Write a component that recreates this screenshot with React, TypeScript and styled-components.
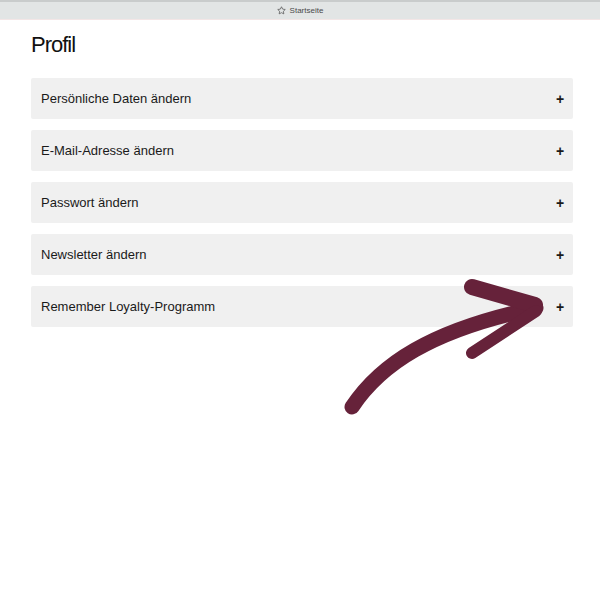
import React from 'react'
import styled, { createGlobalStyle } from 'styled-components'

const GlobalStyle = createGlobalStyle`
  html, body {
    margin: 0;
    padding: 0;
    background: #ffffff;
    font-family: "Liberation Sans", Arial, sans-serif;
  }
`

const Screen = styled.div`
  position: relative;
  width: 600px;
  height: 600px;
  overflow: hidden;
  background: #ffffff;
`

const TabBar = styled.div`
  height: 17px;
  border-top: 2px solid #c9cccc;
  border-bottom: 1px solid #f3e6e6;
  background: #e2e5e5;
  display: flex;
  align-items: center;
  justify-content: center;
  gap: 4px;
  font-size: 8px;
  color: #4a4a4a;
`

const Page = styled.div`
  padding: 12px 27px 0 31px;
`

const Title = styled.h1`
  margin: 0 0 20px 0;
  font-size: 22px;
  font-weight: 400;
  letter-spacing: -1px;
  line-height: 26px;
  color: #111111;
`

const List = styled.div`
  display: flex;
  flex-direction: column;
  gap: 11px;
`

const Row = styled.div`
  height: 41px;
  display: flex;
  align-items: center;
  justify-content: space-between;
  padding: 0 8px 0 10px;
  background: #f0f0f0;
  border-radius: 2px;
  font-size: 13px;
  color: #1a1a1a;
`

const Plus = styled.span`
  font-size: 14px;
  font-weight: 700;
  width: 10px;
  text-align: center;
`

const Arrow = styled.svg`
  position: absolute;
  left: 0;
  top: 0;
  pointer-events: none;
`

const items = [
  'Persönliche Daten ändern',
  'E-Mail-Adresse ändern',
  'Passwort ändern',
  'Newsletter ändern',
  'Remember Loyalty-Programm',
]

export default function App() {
  return (
    <Screen>
      <GlobalStyle />
      <TabBar>
        <svg width="9" height="9" viewBox="0 0 24 24" fill="none" stroke="#555" strokeWidth="2">
          <polygon points="12 2 15.1 8.3 22 9.3 17 14.1 18.2 21 12 17.8 5.8 21 7 14.1 2 9.3 8.9 8.3 12 2" />
        </svg>
        <span>Startseite</span>
      </TabBar>
      <Page>
        <Title>Profil</Title>
        <List>
          {items.map((label) => (
            <Row key={label}>
              <span>{label}</span>
              <Plus>+</Plus>
            </Row>
          ))}
        </List>
      </Page>
      <Arrow width="600" height="600" viewBox="0 0 600 600">
        <g stroke="#66223a" fill="none" strokeLinecap="round">
          <path d="M352 407 C380 365 430 330 536 308" strokeWidth="15" />
          <line x1="472" y1="287" x2="535" y2="305" strokeWidth="16" />
          <line x1="536" y1="311" x2="472" y2="353" strokeWidth="12" />
        </g>
      </Arrow>
    </Screen>
  )
}
